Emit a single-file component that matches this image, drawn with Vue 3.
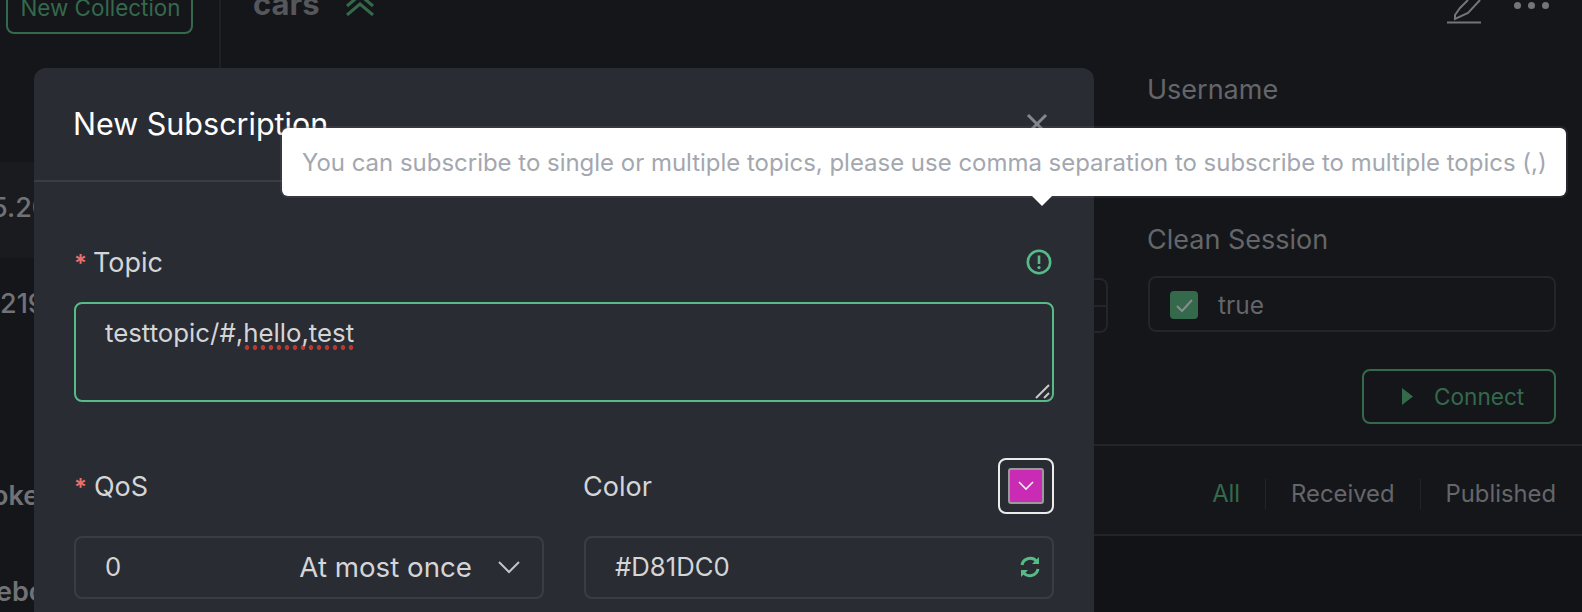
<script setup>
const tabs = ['All', 'Received', 'Published']
const rows = [
  { text: '5.20', cls: 'sel light', shift: -9 },
  { text: '219', cls: 'light', shift: 0 },
  { text: 'oke', cls: 'gap', shift: -8 },
  { text: 'ebo', cls: '', shift: -4 }
]
</script>

<template>
  <div class="app">
    <aside class="side">
      <button class="new-col">New Collection</button>
      <div class="conn-list">
        <div v-for="r in rows" :key="r.text" class="conn" :class="r.cls"><span :style="{ marginLeft: r.shift + 'px' }">{{ r.text }}</span></div>
      </div>
    </aside>
    <main class="main">
      <header class="head">
        <span class="cars">cars</span>
        <svg class="chev" viewBox="0 0 30 24" width="30" height="24"><path d="M2 14 15 3l13 11M2 23 15 12l13 11" fill="none" stroke="#34694c" stroke-width="3"/></svg>
        <span class="spacer"></span>
        <svg class="pen" viewBox="0 0 36 24" width="36" height="24"><path d="M21 0 13 8 8 15v4l13-6L33 0" fill="none" stroke="#737578" stroke-width="2"/><path d="M0 22.5h34" stroke="#737578" stroke-width="2"/></svg>
        <span class="dots"><i></i><i></i><i></i></span>
      </header>
      <section class="form">
        <div class="field">
          <label class="dim-label hidden-label">Password</label>
          <div class="num-box"><span></span><span></span></div>
        </div>
        <div class="field">
          <label class="dim-label">Username</label>
          <div class="spacer-box"></div>
          <label class="dim-label">Clean Session</label>
          <div class="check-box">
            <span class="check"><svg viewBox="0 0 28 28" width="28" height="28"><path d="M7 15l5 5 10-11" fill="none" stroke="#8a8c8d" stroke-width="2"/></svg></span>
            <span class="true">true</span>
          </div>
        </div>
      </section>
      <div class="actions">
        <button class="connect">
          <svg viewBox="0 0 11 17" width="11" height="17"><path d="M0 0l11 8.5L0 17z" fill="#34694c"/></svg>
          <span>Connect</span>
        </button>
      </div>
      <nav class="tabs">
        <span v-for="(t, i) in tabs" :key="t" class="tab" :class="{ active: i === 0 }">{{ t }}</span>
      </nav>
      <div class="log"></div>
    </main>

    <div class="modal">
      <div class="modal-head">
        <span class="title">New Subscription</span>
        <svg class="close" viewBox="0 0 22 22" width="22" height="22"><path d="M2 2l18 18M20 2 2 20" stroke="#85878c" stroke-width="3"/></svg>
      </div>
      <div class="modal-body">
        <div class="label-row">
          <label class="m-label topic-label"><em>*</em>Topic</label>
          <svg class="warn" viewBox="0 0 26 26" width="26" height="26"><circle cx="13" cy="13" r="11.2" fill="none" stroke="#57bb87" stroke-width="2.6"/><path d="M13 6.5v8.5" stroke="#57bb87" stroke-width="2.6"/><circle cx="13" cy="18.6" r="1.6" fill="#57bb87"/></svg>
        </div>
        <div class="topic">
          testtopic/#,<span class="spell">hello,test</span>
          <svg class="grip" viewBox="0 0 16 16" width="16" height="16"><path d="M1 15 14 2M9 15l5-5" stroke="#c9c9c9" stroke-width="2"/></svg>
        </div>
        <div class="two">
          <div class="col">
            <div class="label-row row-h"><label class="m-label"><em>*</em>QoS</label></div>
            <div class="select">
              <span class="num">0</span>
              <span class="qos-name">At most once</span>
              <svg viewBox="0 0 22 14" width="22" height="14"><path d="M1 2l10 10L21 2" fill="none" stroke="#c2c3c6" stroke-width="2"/></svg>
            </div>
          </div>
          <div class="col">
            <div class="label-row row-h">
              <label class="m-label color-label">Color</label>
              <div class="picker"><div class="swatch"><svg viewBox="0 0 16 10" width="16" height="10"><path d="M1 1l7 7 7-7" fill="none" stroke="#f0f0f0" stroke-width="1.6"/></svg></div></div>
            </div>
            <div class="select color-input">
              <span class="num">#D81DC0</span>
              <svg viewBox="0 0 24 24" width="24" height="24"><path d="M4 10a8.3 8.3 0 0 1 15-3M20 14a8.3 8.3 0 0 1-15 3" fill="none" stroke="#57bb87" stroke-width="3"/><path d="M21 2v7h-7zM3 22v-7h7z" fill="#57bb87"/></svg>
            </div>
          </div>
        </div>
      </div>
      <div class="tooltip">
        You can subscribe to single or multiple topics, please use comma separation to subscribe to multiple topics (,)
      </div>
    </div>
  </div>
</template>

<style scoped>
.app {
  width: 1582px;
  height: 612px;
  position: relative;
  overflow: hidden;
  display: flex;
  background: #15161a;
  font-family: Inter, "Liberation Sans", sans-serif;
}
.side {
  width: 219px;
  flex: none;
  border-right: 2px solid #1f2024;
  box-sizing: content-box;
}
.new-col {
  display: block;
  margin: -20px 0 0 6px;
  width: 187px;
  height: 54px;
  border: 2px solid #34694c;
  border-radius: 8px;
  background: none;
  color: #34694c;
  font: 400 22.4px Inter, sans-serif;
  padding: 0 0 0 2px;
  box-sizing: border-box;
}
.conn-list { margin-top: 128px; }
.conn {
  height: 96px;
  padding-bottom: 6px;
  box-sizing: border-box;
  display: flex;
  align-items: center;
  font-size: 27px;
  font-weight: 600;
  color: #707276;
  overflow: hidden;
}
.conn span { flex: none; }
.conn.light { font-weight: 500; }
.conn.sel { background: #1a1b1f; }
.conn.gap { margin-top: 96px; }
.main { flex: 1; display: flex; flex-direction: column; min-width: 0; }
.head {
  display: flex;
  align-items: center;
  height: 46px;
  margin-top: -20px;
  padding: 0 33px 0 32px;
  flex: none;
}
.cars { font-size: 31px; font-weight: 700; color: #55575b; }
.chev { margin-left: 25px; margin-top: 1px; }
.spacer { flex: 1; }
.pen { align-self: flex-start; margin-top: 20px; }
.dots { align-self: flex-start; display: flex; gap: 7px; margin-left: 31px; margin-top: 22px; }
.dots i { width: 7px; height: 7px; border-radius: 50%; background: #737578; }
.form {
  display: flex;
  justify-content: flex-end;
  gap: 40px;
  padding: 0 26px 0 0;
  margin-top: 49px;
  flex: none;
}
.field { width: 408px; }
.dim-label { display: block; color: #64666a; font-size: 27px; line-height: 30px; margin-left: -1px; }
.hidden-label { visibility: hidden; }
.spacer-box { height: 120px; }
.num-box {
  margin-top: 173px;
  height: 55px;
  border: 2px solid #24252a;
  border-radius: 8px;
  box-sizing: border-box;
  display: flex;
  flex-direction: column;
}
.num-box span { flex: 1; }
.num-box span + span { border-top: 2px solid #24252a; }
.check-box {
  margin-top: 21px;
  height: 56px;
  border: 2px solid #24252a;
  border-radius: 8px;
  box-sizing: border-box;
  display: flex;
  align-items: center;
  padding-left: 20px;
  padding-top: 1px;
  gap: 20px;
}
.check { width: 28px; height: 28px; background: #34694c; border-radius: 4px; display: block; }
.check svg { display: block; }
.true { color: #64666a; font-size: 24.5px; padding-top: 1px; }
.actions { display: flex; justify-content: flex-end; padding: 36px 26px 0 0; flex: none; }
.connect {
  width: 194px;
  height: 55px;
  border: 2px solid #34694c;
  border-radius: 8px;
  background: none;
  color: #34694c;
  font: 400 22.6px Inter, sans-serif;
  display: flex;
  align-items: center;
  justify-content: flex-start;
  gap: 21px;
  padding: 0 0 0 38px;
  box-sizing: border-box;
}
.tabs {
  margin-top: 20px;
  height: 92px;
  border-top: 2px solid #232428;
  border-bottom: 2px solid #232428;
  box-sizing: border-box;
  display: flex;
  justify-content: flex-end;
  align-items: center;
  padding: 8px 26px 0 0;
  flex: none;
}
.tab { font-size: 23.8px; color: #64666a; padding: 0 25px; border-left: 1px solid #232428; line-height: 30px; }
.tab:first-child { border-left: 0; }
.tab:last-child { padding-right: 0; }
.tab.active { color: #34694c; }
.log { flex: 1; background: #121317; }

.modal {
  position: absolute;
  left: 34px;
  top: 68px;
  width: 1060px;
  height: 620px;
  background: #292c33;
  border-radius: 12px;
}
.modal-head {
  height: 114px;
  border-bottom: 2px solid #3a3d45;
  padding: 0 40px;
  display: flex;
  justify-content: space-between;
  align-items: center;
  box-sizing: border-box;
}
.title { color: #fff; font-size: 30.5px; margin: 0 0 1px -1px; }
.close { margin-right: 6px; }
.modal-body { padding: 0 40px; }
.label-row {
  display: flex;
  justify-content: space-between;
  align-items: center;
  height: 40px;
  margin-top: 59px;
}
.m-label { color: #d4d5d7; font-size: 27px; }
.m-label em { color: #e66f6f; font-style: normal; font-weight: 600; margin-right: 7px; font-size: 24px; }
.topic-label { padding-top: 2px; }
.topic-label em { margin-right: 6px; }
.color-label { margin-left: -1px; }
.warn { margin: 2px 2px 0 0; }
.topic {
  position: relative;
  height: 100px;
  border: 2px solid #57bb87;
  border-radius: 8px;
  box-sizing: border-box;
  margin-top: 21px;
  padding: 11px 29px;
  color: #d4d5d7;
  font-size: 25.8px;
  line-height: 36px;
}
.spell {
  padding-bottom: 2px;
  background: radial-gradient(circle at center, #b9392f 2.2px, transparent 2.6px) repeat-x left bottom / 8px 5px;
}
.grip { position: absolute; right: 1px; bottom: 1px; }
.two { display: grid; grid-template-columns: 470px 470px; gap: 40px; }
.col { min-width: 0; }
.row-h { height: 56px; margin-top: 56px; }
.select {
  margin-top: 22px;
  height: 63px;
  border: 2px solid #3a3d45;
  border-radius: 8px;
  box-sizing: border-box;
  display: flex;
  align-items: center;
  padding: 0 22px 2px 29px;
  color: #d4d5d7;
  font-size: 27.7px;
}
.num { font-size: 25.7px; }
.qos-name { margin-left: auto; margin-right: 26px; }
.color-input { justify-content: space-between; padding-right: 10px; }
.picker {
  width: 56px;
  height: 56px;
  border: 2px solid #ececec;
  border-radius: 8px;
  box-sizing: border-box;
  padding: 8px;
}
.swatch {
  width: 100%;
  height: 100%;
  background: #c92bb5;
  border: 2px solid #9a9a9a;
  border-radius: 3px;
  box-sizing: border-box;
  display: flex;
  align-items: center;
  justify-content: center;
}
.tooltip {
  position: absolute;
  left: 248px;
  top: 60px;
  width: 1284px;
  height: 68px;
  box-sizing: border-box;
  background: #fff;
  border-radius: 6px;
  color: #a3a7af;
  font-size: 23.96px;
  line-height: 70px;
  padding-left: 20px;
  white-space: nowrap;
  box-shadow: 0 0 0 2px rgba(90, 92, 98, 0.25);
}
.tooltip::after {
  content: "";
  position: absolute;
  left: 750px;
  top: 68px;
  border: 10px solid transparent;
  border-top-color: #fff;
  border-bottom-width: 0;
}
</style>
